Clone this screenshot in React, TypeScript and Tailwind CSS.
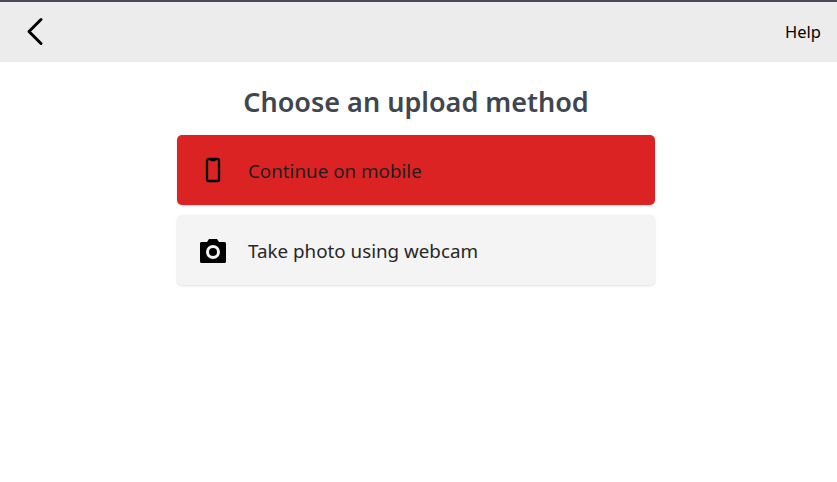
import React from 'react';

const App: React.FC = () => {
  return (
    <div className="h-[482px] w-[837px] overflow-hidden bg-white font-['Noto_Sans',sans-serif]">
      {/* Top bar */}
      <div className="h-[62px] border-t-2 border-[#4b4b57] bg-[#ececec] flex items-center justify-between pl-[18px] pr-4">
        <button className="text-black">
          <svg width="34" height="34" viewBox="0 0 34 34" fill="none" stroke="currentColor" strokeWidth="3" strokeLinecap="round" strokeLinejoin="round">
            <path d="M23 4.500 L11 16.500 L23 28.500" />
          </svg>
        </button>
        <span className="text-[16.5px] text-black">Help</span>
      </div>

      {/* Main */}
      <div className="flex flex-col items-center pr-[5px]">
        <h1 className="mt-[22px] text-[27px] leading-[36px] font-semibold text-[#3f4650]">Choose an upload method</h1>
        <div className="mt-[15px] w-[478px] flex flex-col gap-[10px]">
          <button className="h-[70px] rounded-[5px] bg-[#dc2323] shadow flex items-center pl-[23px] text-[#1f1f1f]">
            <svg className="w-[28px]" width="28" height="28" viewBox="0 0 28 28" fill="none" stroke="#000">
              <rect x="7" y="3" width="12" height="22" rx="1.5" strokeWidth="2.300" />
              <path d="M10.500 4.500h5" strokeWidth="1.500" />
            </svg>
            <span className="ml-[20px] mt-[2px] text-[18.800px]">Continue on mobile</span>
          </button>
          <button className="h-[70px] rounded-[5px] bg-[#f4f4f4] shadow flex items-center pl-[23px] text-[#262626]">
            <svg className="w-[28px]" width="28" height="28" viewBox="0 0 28 28" fill="#000">
              <path fillRule="evenodd" d="M9 3 7 6H1.500C.7 6 0 6.700 0 7.500v18C0 26.300.7 27 1.500 27h23c.8 0 1.500-.7 1.500-1.500v-18c0-.8-.7-1.500-1.500-1.500H19l-2-3H9zM13 9a7 7 0 1 1 0 14 7 7 0 0 1 0-14z" />
              <circle cx="13" cy="16" r="4" />
            </svg>
            <span className="ml-[20px] mt-[2px] text-[18.800px]">Take photo using webcam</span>
          </button>
        </div>
      </div>
    </div>
  );
};

export default App;
